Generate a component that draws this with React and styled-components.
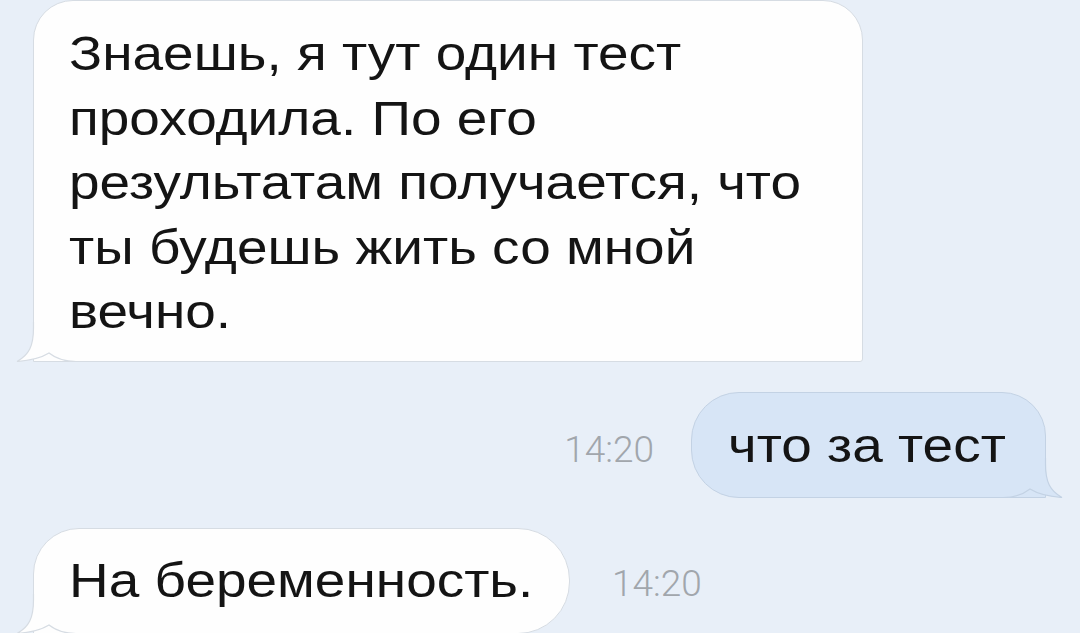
import React from 'react';
import styled, { createGlobalStyle } from 'styled-components';

const GlobalStyle = createGlobalStyle`
  html, body {
    margin: 0;
    padding: 0;
    background: #e8eff8;
  }
  body {
    font-family: "Liberation Sans", Arial, sans-serif;
    -webkit-font-smoothing: antialiased;
  }
`;

const Screen = styled.div`
  width: 1080px;
  height: 633px;
  overflow: hidden;
  background: #e8eff8;
  box-sizing: border-box;
  padding: 0 34px 0 33px;
  display: flex;
  flex-direction: column;
`;

const Row = styled.div`
  display: flex;
  align-items: center;
  justify-content: ${(p) => (p.$out ? 'flex-end' : 'flex-start')};
  margin-top: ${(p) => p.$gap || 0}px;
  gap: ${(p) => p.$spacing || 0}px;
  flex-shrink: 0;
`;

const Bubble = styled.div`
  position: relative;
  flex-shrink: 0;
  box-sizing: border-box;
  background: ${(p) => (p.$out ? '#d7e5f6' : '#fefefe')};
  border: 1px solid ${(p) => (p.$out ? '#c3d2e4' : '#d6dce3')};
  border-radius: ${(p) => p.$radius};
  width: ${(p) => p.$width}px;
  height: ${(p) => p.$height}px;
  padding: ${(p) => p.$pad};
`;

// the screenshot is stretched sideways, so the copy is widened to match
const Text = styled.div`
  position: relative;
  color: #141414;
  font-size: 48px;
  line-height: 64.5px;
  white-space: nowrap;
  transform: scaleX(1.145);
  transform-origin: left top;
`;

const Time = styled.span`
  font-family: Roboto, "Liberation Sans", sans-serif;
  font-weight: 300;
  font-size: 37px;
  color: #a1a6ac;
  margin-top: ${(p) => p.$drop || 0}px;
`;

const TailSvg = styled.svg`
  position: absolute;
  bottom: -1px;
  width: 60px;
  height: 40px;
  ${(p) => (p.$right ? 'right: -18px; transform: scaleX(-1);' : 'left: -18px;')}
`;

const Tail = ({ right, fill, stroke }) => (
  <TailSvg $right={right} viewBox="0 0 60 40">
    <path
      d="M17.5 0 L17.5 6 C17.5 24 13 33 1 39.5 C14 38.5 25 36 33 31 C40 36.5 49 39.5 60 39.5 L60 0 Z"
      fill={fill}
    />
    <path
      d="M17.5 0 L17.5 6 C17.5 24 13 33 1 39.5 C14 38.5 25 36 33 31 C40 36.5 49 39.5 60 39.5"
      fill="none"
      stroke={stroke}
      strokeWidth="1.2"
    />
  </TailSvg>
);

const firstMessage = [
  'Знаешь, я тут один тест',
  'проходила. По его',
  'результатам получается, что',
  'ты будешь жить со мной',
  'вечно.',
];

export default function App() {
  return (
    <Screen>
      <GlobalStyle />
      <Row>
        <Bubble
          $width={830}
          $height={362}
          $radius="40px 40px 3px 0"
          $pad="21px 0 0 35px"
        >
          <Tail fill="#fefefe" stroke="#d6dce3" />
          <Text>
            {firstMessage.map((t) => (
              <div key={t}>{t}</div>
            ))}
          </Text>
        </Bubble>
      </Row>
      <Row $out $gap={30} $spacing={37}>
        <Time $drop={8}>14:20</Time>
        <Bubble
          $out
          $width={355}
          $height={106}
          $radius="48px 44px 0 48px"
          $pad="21px 0 0 36px"
        >
          <Tail right fill="#d7e5f6" stroke="#c3d2e4" />
          <Text>что за тест</Text>
        </Bubble>
      </Row>
      <Row $gap={30} $spacing={42}>
        <Bubble
          $width={537}
          $height={106}
          $radius="46px 52px 52px 0"
          $pad="20px 0 0 35px"
        >
          <Tail fill="#fefefe" stroke="#d6dce3" />
          <Text>На беременность.</Text>
        </Bubble>
        <Time $drop={4}>14:20</Time>
      </Row>
    </Screen>
  );
}
